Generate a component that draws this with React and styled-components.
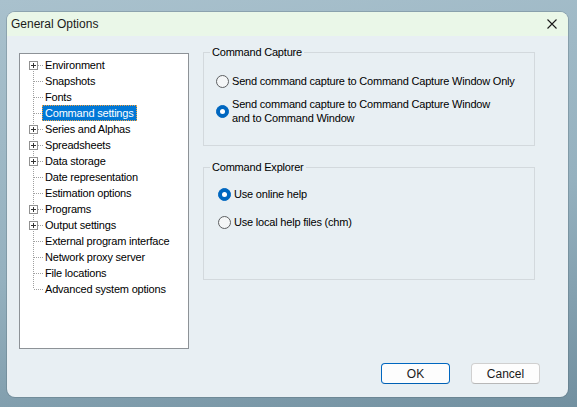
import React from 'react';
import styled, { createGlobalStyle } from 'styled-components';

const GlobalStyle = createGlobalStyle`
    html, body {
        margin: 0;
        padding: 0;
    }
    body {
        font-family: "Liberation Sans", Arial, sans-serif;
    }
`;

// Tree entries shown in the left panel
const treeItems = [
    { label: 'Environment', expandable: true },
    { label: 'Snapshots' },
    { label: 'Fonts' },
    { label: 'Command settings', selected: true },
    { label: 'Series and Alphas', expandable: true },
    { label: 'Spreadsheets', expandable: true },
    { label: 'Data storage', expandable: true },
    { label: 'Date representation' },
    { label: 'Estimation options' },
    { label: 'Programs', expandable: true },
    { label: 'Output settings', expandable: true },
    { label: 'External program interface' },
    { label: 'Network proxy server' },
    { label: 'File locations' },
    { label: 'Advanced system options' },
];

// Dotted tree lines plus the optional expand box
function TreeConnector({ expandable, first, last }) {
    const lineColor = '#a0a0a0';
    return (
        <ConnectorSvg width="23" height="16" viewBox="0 0 23 16" shapeRendering="crispEdges">
            <line
                x1="13.5" y1={first ? 8 : 0} x2="13.5" y2={last ? 8 : 16}
                stroke={lineColor} strokeDasharray="1 1"
            />
            <line x1="14" y1="8.5" x2="23" y2="8.5" stroke={lineColor} strokeDasharray="1 1" />
            {expandable && (
                <g>
                    <rect x="9.5" y="4.5" width="8" height="8" fill="#fff" stroke="#919191" />
                    <line x1="11" y1="8.5" x2="16" y2="8.5" stroke="#333" />
                    <line x1="13.5" y1="6" x2="13.5" y2="11" stroke="#333" />
                </g>
            )}
        </ConnectorSvg>
    );
}

function Radio({ checked, children }) {
    return (
        <RadioRow>
            <RadioCircle checked={checked} />
            <RadioLabel>{children}</RadioLabel>
        </RadioRow>
    );
}

function CloseIcon() {
    return (
        <svg width="10" height="10" viewBox="0 0 10 10">
            <path d="M0.5 0.5 L9.5 9.5 M9.5 0.5 L0.5 9.5" stroke="#1a1a1a" strokeWidth="1.1" fill="none" />
        </svg>
    );
}

export default function App() {
    return (
        <Desktop>
            <GlobalStyle />
            <Window>
                {/* Title bar */}
                <TitleBar>
                    <Title>General Options</Title>
                    <CloseButton><CloseIcon /></CloseButton>
                </TitleBar>

                <Body>
                    <Main>
                        {/* Options tree */}
                        <Tree>
                            {treeItems.map((item, i) => (
                                <TreeRow key={item.label}>
                                    <TreeConnector
                                        expandable={item.expandable}
                                        first={i === 0}
                                        last={i === treeItems.length - 1}
                                    />
                                    <TreeLabel selected={item.selected}>{item.label}</TreeLabel>
                                </TreeRow>
                            ))}
                        </Tree>

                        {/* Settings page */}
                        <Page>
                            <Group padX="12px" pad="14px 12px 20px" height="101px">
                                <Legend>Command Capture</Legend>
                                <RadioList gap="8px">
                                    <Radio>Send command capture to Command Capture Window Only</Radio>
                                    <Radio checked>
                                        Send command capture to Command Capture Window<br />
                                        and to Command Window
                                    </Radio>
                                </RadioList>
                            </Group>
                            <Group padX="14px" pad="12px 14px" height="120px">
                                <Legend>Command Explorer</Legend>
                                <RadioList gap="12px">
                                    <Radio checked>Use online help</Radio>
                                    <Radio>Use local help files (chm)</Radio>
                                </RadioList>
                            </Group>
                        </Page>
                    </Main>

                    {/* Dialog buttons */}
                    <ButtonBar>
                        <Button primary>OK</Button>
                        <Button>Cancel</Button>
                    </ButtonBar>
                </Body>
            </Window>
        </Desktop>
    );
}

// Styled components...

const Desktop = styled.div`
    width: 577px;
    height: 407px;
    box-sizing: border-box;
    padding: 12px 0 0 7px;
    overflow: hidden;
    background: linear-gradient(170deg, #a9c1cd 0%, #95b1bf 55%, #7290a0 100%);
`;

const Window = styled.div`
    width: 561px;
    height: 385px;
    display: flex;
    flex-direction: column;
    background: #e8eff3;
    border-radius: 8px;
    overflow: hidden;
    box-shadow: 0 0 0 1px rgba(80, 100, 110, 0.3);
`;

const TitleBar = styled.div`
    height: 24px;
    flex-shrink: 0;
    display: flex;
    align-items: center;
    justify-content: space-between;
    padding: 0 11px 0 4px;
    background: #eaf7e8;
`;

const Title = styled.div`
    font-size: 12px;
    color: #1a1a1a;
`;

const CloseButton = styled.div`
    display: flex;
    align-items: center;
`;

const Body = styled.div`
    flex: 1;
    display: flex;
    flex-direction: column;
    padding: 17px 0 0 12px;
    font-size: 11px;
    letter-spacing: -0.2px;
    color: #000;
`;

const Main = styled.div`
    display: grid;
    grid-template-columns: 170px 332px;
    column-gap: 14px;
    align-items: start;
`;

const Tree = styled.div`
    height: 296px;
    box-sizing: border-box;
    padding-top: 3px;
    background: #fff;
    border: 1px solid #8d9297;
`;

const TreeRow = styled.div`
    display: flex;
    align-items: center;
    height: 16px;
`;

const ConnectorSvg = styled.svg`
    flex-shrink: 0;
    display: block;
`;

const TreeLabel = styled.span`
    height: 16px;
    line-height: 14px;
    box-sizing: border-box;
    padding: 0 2px;
    white-space: nowrap;
    border: 1px ${({ selected }) => (selected ? 'dotted #f0a040' : 'solid transparent')};
    background: ${({ selected }) => (selected ? '#0078d7' : 'transparent')};
    color: ${({ selected }) => (selected ? '#fff' : '#000')};
    margin-left: -1px;
`;

const Page = styled.div`
    display: flex;
    flex-direction: column;
    gap: 14px;
    margin-top: -8px;
`;

const Group = styled.fieldset`
    margin: 0;
    height: ${({ height }) => height};
    box-sizing: border-box;
    padding: ${({ pad }) => pad};
    border: 1px solid #d3d9dd;
    min-width: 0;

    & > legend {
        margin-left: calc(6px - ${({ padX }) => padX});
    }
`;

const Legend = styled.legend`
    padding: 0 2px;
    line-height: 14px;
`;

const RadioList = styled.div`
    display: flex;
    flex-direction: column;
    gap: ${({ gap }) => gap};
`;

const RadioRow = styled.div`
    display: flex;
    align-items: center;
    gap: 3px;
    min-height: 16px;
`;

const RadioCircle = styled.span`
    width: 13px;
    height: 13px;
    box-sizing: border-box;
    border-radius: 50%;
    flex-shrink: 0;
    display: flex;
    align-items: center;
    justify-content: center;
    background: ${({ checked }) => (checked ? '#0067c0' : '#f4f6f7')};
    border: 1px solid ${({ checked }) => (checked ? '#0067c0' : '#5d5f61')};

    &::after {
        content: '';
        width: 5px;
        height: 5px;
        border-radius: 50%;
        background: #fff;
        display: ${({ checked }) => (checked ? 'block' : 'none')};
    }
`;

const RadioLabel = styled.span`
    line-height: 14px;
`;

const ButtonBar = styled.div`
    display: flex;
    justify-content: flex-end;
    gap: 21px;
    margin-top: 14px;
    padding-right: 28px;
`;

const Button = styled.button`
    width: 69px;
    height: 21px;
    padding: 0;
    font-family: "Liberation Sans", Arial, sans-serif;
    font-size: 12px;
    color: #1a1a1a;
    background: #fdfdfd;
    border: 1px solid ${({ primary }) => (primary ? '#0067c0' : '#d0d0d0')};
    border-bottom-color: ${({ primary }) => (primary ? '#0060b4' : '#b8b8b8')};
    border-radius: 4px;
`;
